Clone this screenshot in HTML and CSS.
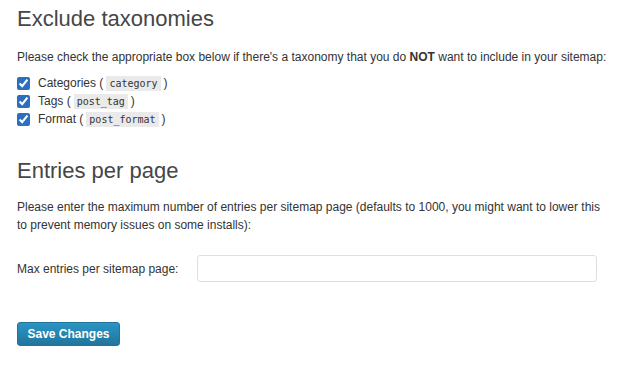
FILE: index.html
```html
<!DOCTYPE html>
<html>
  <head>
    <meta charset="utf-8" />
    <title>Sitemap settings</title>
    <link rel="stylesheet" href="styles.css">
  </head>
  <body>
    <div class="wrap">
      <h3 class="title">Exclude taxonomies</h3>
      <p>Please check the appropriate box below if there's a taxonomy that you do <strong>NOT</strong> want to include in your sitemap:</p>
      <div class="checks">
        <label class="check"><input type="checkbox" checked /> Categories (<code>category</code>)</label>
        <label class="check"><input type="checkbox" checked /> Tags (<code>post_tag</code>)</label>
        <label class="check"><input type="checkbox" checked /> Format (<code>post_format</code>)</label>
      </div>

      <h3 class="title second">Entries per page</h3>
      <p class="note">Please enter the maximum number of entries per sitemap page (defaults to 1000, you might want to lower this to prevent memory issues on some installs):</p>
      <div class="field">
        <label for="entries">Max entries per sitemap page:</label>
        <input type="text" id="entries" />
      </div>

      <div class="submit">
        <input type="submit" class="button-primary" value="Save Changes" />
      </div>
    </div>
  </body>
</html>
```

FILE: styles.css
```css
  body {
    margin: 0;
    background: #ffffff;
    color: #333333;
    font-family: "Liberation Sans", Arial, sans-serif;
    font-size: 12px;
  }
  .wrap {
    padding: 0 17px;
  }
  .title {
    font-size: 22px;
    font-weight: normal;
    color: #464646;
    margin: 0;
    padding-top: 4px;
    line-height: 29px;
  }
  .second {
    padding-top: 0;
    margin-top: 28px;
  }
  p {
    margin: 15px 0 0 0;
    line-height: 18px;
  }
  p.note {
    margin-top: 13px;
  }
  .checks {
    margin-top: 8px;
  }
  .check {
    display: flex;
    align-items: center;
    height: 18px;
  }
  .check input {
    margin: 0 8px 0 0;
    width: 13px;
    height: 13px;
    accent-color: #2d6fbf;
  }
  code {
    font-family: "DejaVu Sans Mono", monospace;
    font-size: 10px;
    background: #eaeaea;
    padding: 2px 3px;
    margin: 0 3px;
  }
  .field {
    display: flex;
    align-items: center;
    margin-top: 21px;
  }
  .field label {
    width: 180px;
  }
  .field input {
    width: 400px;
    height: 27px;
    box-sizing: border-box;
    border: 1px solid #dfdfdf;
    border-radius: 3px;
    margin: 0;
  }
  .submit {
    margin-top: 40px;
  }
  .button-primary {
    font-family: "Liberation Sans", Arial, sans-serif;
    font-size: 12px;
    font-weight: bold;
    color: #ffffff;
    width: 103px;
    height: 24px;
    border: 1px solid #21759b;
    border-radius: 3px;
    background: linear-gradient(#2a95c5, #21759b);
    padding: 0;
  }
```
